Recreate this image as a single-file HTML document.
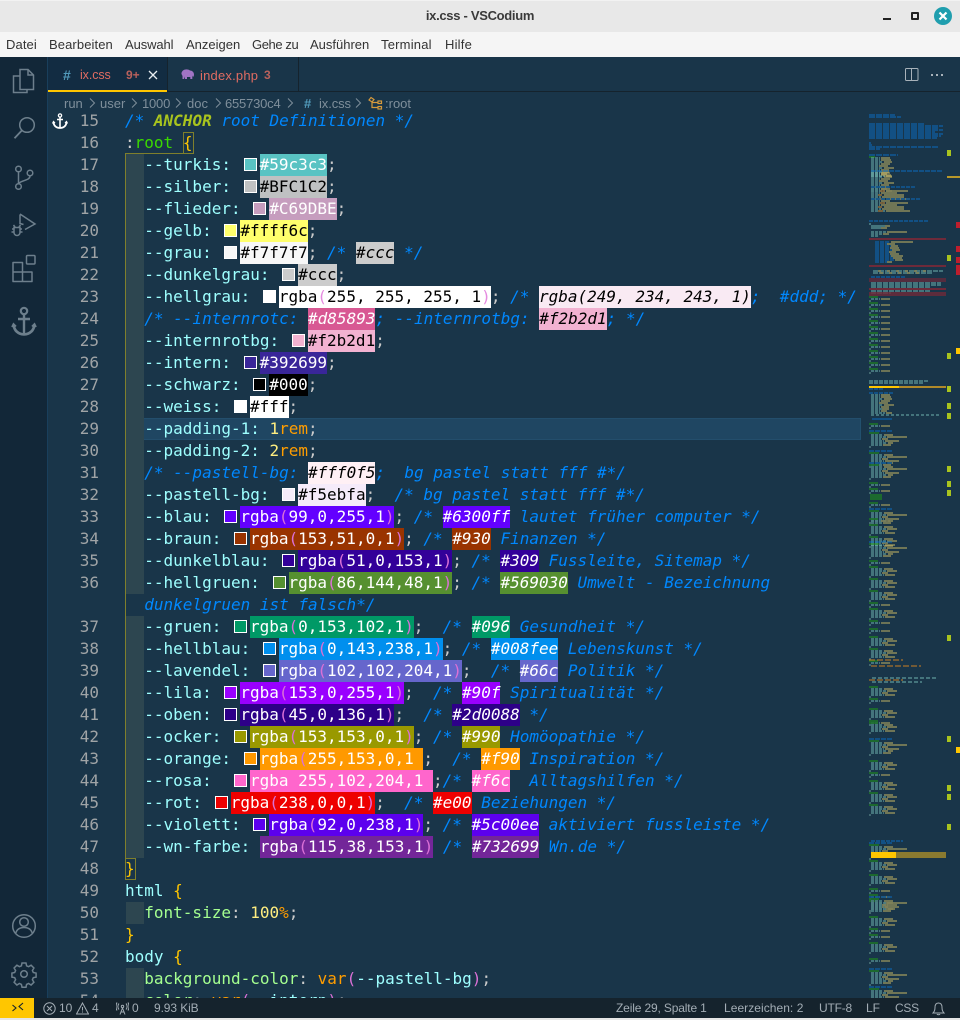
<!DOCTYPE html>
<html lang="de"><head><meta charset="utf-8"><title>ix.css - VSCodium</title>
<style>
*{box-sizing:border-box}
html,body{margin:0;padding:0;width:960px;height:1020px;overflow:hidden;background:#e8e8e8;font-family:"Liberation Sans",sans-serif}
.a{position:absolute;white-space:pre}
#code{position:absolute;left:125px;top:110px;width:736px;height:888px;overflow:hidden;font:16px/22px "DejaVu Sans Mono",monospace;color:#ccc}
.l{height:22px;line-height:22px;white-space:pre}
.p{color:#9effff}.g{color:#a5ff90}.c{color:#0088ff;font-style:italic}.y{color:#ffc600}
.n{color:#ffee80}.o{color:#ff9d00}.q{color:#da70d6}
.s{display:inline-block;width:13px;height:13px;border:1px solid #fff;margin:4px 3px 0;vertical-align:top}
.h{display:inline-block;height:22px;line-height:22px;vertical-align:top;color:#fff}
.k{color:#000}.it{font-style:italic}
#nums{position:absolute;left:60px;top:110px;width:39px;height:888px;overflow:hidden;text-align:right;font:16px/22px "DejaVu Sans Mono",monospace;color:#a0a4a6;white-space:pre}
.m{font-size:13px;color:#333;top:36px;line-height:17px}
.st{font-size:12px;color:#a3adb5;top:1000px;line-height:17px}
.bc{font-size:13px;color:#7f8f9b;top:95px;line-height:17px}
.tb{font-size:13px;top:67px;line-height:17px}
</style></head><body>

<div class="a" style="left:0;top:0;width:960px;height:32px;background:#e8e8e8;border-top:1px solid #f2f2f2"></div>
<div class="a" style="left:0;top:7px;width:960px;text-align:center;font-size:13px;font-weight:bold;letter-spacing:-.3px;color:#3a3a3a;line-height:18px">ix.css - VSCodium</div>
<div class="a" style="left:883px;top:18px;width:8px;height:2px;background:#222"></div>
<div class="a" style="left:911px;top:12px;width:8px;height:8px;border:2px solid #222;border-radius:1px"></div>
<svg class="a" style="left:934px;top:7px" width="18" height="18" viewBox="0 0 18 18"><circle cx="9" cy="9" r="9" fill="#1f9eae"/><path d="M5.5 5.5l7 7M12.5 5.5l-7 7" stroke="#fff" stroke-width="2.2"/></svg>

<div class="a" style="left:0;top:32px;width:960px;height:25px;background:#f5f5f5"></div>
<div class="a m" style="left:6px;letter-spacing:.1px">Datei</div>
<div class="a m" style="left:49px;letter-spacing:.1px">Bearbeiten</div>
<div class="a m" style="left:125px;letter-spacing:-.1px">Auswahl</div>
<div class="a m" style="left:186px">Anzeigen</div>
<div class="a m" style="left:252px;letter-spacing:-.4px">Gehe zu</div>
<div class="a m" style="left:310px">Ausführen</div>
<div class="a m" style="left:381px;letter-spacing:.2px">Terminal</div>
<div class="a m" style="left:445px;letter-spacing:.2px">Hilfe</div>

<div class="a" style="left:0;top:57px;width:960px;height:941px;background:#193549"></div>
<div class="a" style="left:0;top:998px;width:960px;height:20px;background:#15232d"></div>
<div class="a" style="left:0;top:1018px;width:960px;height:2px;background:#e6e6e6"></div>

<div class="a" style="left:0;top:57px;width:48px;height:941px;background:#122738;border-right:1px solid #193f5c"></div>
<svg class="a" style="left:0;top:57px" width="48" height="941" viewBox="0 0 48 941" fill="none" stroke="#6d7f8c" stroke-width="1.5">
<path d="M20 12.5h8l5.5 5.5v14.500h-13.500zM28 12.500v5.500h5.500"/><path d="M20 19h-6.500v16.500h13.500v-3"/>
<circle cx="27" cy="68" r="7.300"/><path d="M21.800 73.500l-7.300 7.800" stroke-width="1.800"/>
<circle cx="18.500" cy="112" r="2.800"/><circle cx="18.500" cy="129.500" r="2.800"/><circle cx="30" cy="116" r="2.800"/><path d="M18.500 115v11.500M30 119c0 4.500-8 4-11.500 7.500"/>
<path d="M20 157.500v9l3.500 1M20 157l15 10-10 5.500"/><path d="M14 170.500h6v5a3 3 0 0 1-6 0zM14 172h-2M20 172h2M14 175h-2.500M20 175h2.500M15 170l-1.500-2M19 170l1.500-2" />
<path d="M13 205.500h9.500v9.500h-9.500zM13 215h9.500v9.500h-9.500zM22.500 215h9.500v9.500h-9.500z" stroke-linejoin="round"/><rect x="26.500" y="198.500" width="8.500" height="8.500" rx="1"/>
<circle cx="24" cy="254" r="3.200" stroke-width="2.200"/><path d="M24 257v20M18 262h12" stroke-width="2.400"/><path d="M13.500 268c1 6 5 9 10.500 9.500 5.500-.5 9.500-3.500 10.500-9.500" stroke-width="2.600"/><path d="M12 270l1.500-3 2.500 2.500M36 270l-1.500-3-2.500 2.500" stroke-width="1.800"/>
<circle cx="24" cy="869" r="11.300"/><circle cx="24" cy="865" r="4.300"/><path d="M15.500 877c1-4.500 4-6.500 8.500-6.500s7.500 2 8.500 6.500"/>
<path d="M22 906h4l.6 2.800 2 .9 2.500-1.500 2.800 2.800-1.500 2.500.9 2 2.800.6v4l-2.800.6-.9 2 1.500 2.500-2.800 2.800-2.500-1.500-2 .9-.6 2.800h-4l-.6-2.800-2-.9-2.500 1.500-2.800-2.800 1.500-2.500-.9-2-2.800-.6v-4l2.800-.6.9-2-1.500-2.500 2.800-2.800 2.500 1.500 2-.9z"/><circle cx="24" cy="917" r="3.300"/>
</svg>

<div class="a" style="left:48px;top:91px;width:912px;height:1px;background:#15232d"></div>
<div class="a" style="left:48px;top:57px;width:119px;height:34px;background:#122c42"></div>
<div class="a" style="left:48px;top:90px;width:119px;height:2px;background:#ffc600"></div>
<div class="a" style="left:167px;top:57px;width:1px;height:34px;background:#15232d"></div>
<div class="a" style="left:298px;top:57px;width:1px;height:34px;background:#15232d"></div>
<div class="a tb" style="left:63px;color:#519aba;font-weight:bold;font-size:14px">#</div>
<div class="a tb" style="left:80px;color:#e06c62;font-size:12.5px;letter-spacing:-.1px">ix.css</div>
<div class="a tb" style="left:126px;color:#b9615c;font-size:12px;font-weight:bold">9+</div>
<svg class="a" style="left:148px;top:70px" width="10" height="10" viewBox="0 0 10 10"><path d="M1 1l8 8M9 1l-8 8" stroke="#e8eef2" stroke-width="1.300"/></svg>
<svg class="a" style="left:181px;top:69px" width="14" height="11" viewBox="0 0 14 11" fill="#a074c4"><path d="M2 1.500c2-1.500 5-1.500 7 0 2 0 4 1.500 4 4 0 1-.3 2-1 2.500l-.7-1.500V10h-2V8H6v2H4V7.500L3 10H1.500V7L.5 5C.3 3.500 1 2.500 2 1.500z"/></svg>
<div class="a tb" style="left:200px;color:#e06c62;letter-spacing:.2px">index.php</div>
<div class="a tb" style="left:264px;color:#b9615c;font-size:12px;font-weight:bold">3</div>
<svg class="a" style="left:905px;top:68px" width="14" height="13" viewBox="0 0 14 13" fill="none" stroke="#a8b2ba"><rect x=".5" y=".5" width="12.500" height="12" rx="1"/><path d="M6.500 .5v12"/></svg>
<div class="a" style="left:931px;top:74px;width:2px;height:2px;background:#a8b2ba;box-shadow:5px 0 #a8b2ba,10px 0 #a8b2ba"></div>

<div class="a bc" style="left:64px">run</div>
<div class="a bc" style="left:100px">user</div>
<div class="a bc" style="left:142px;letter-spacing:-.2px">1000</div>
<div class="a bc" style="left:187px">doc</div>
<div class="a bc" style="left:225px;letter-spacing:-.2px">655730c4</div>
<div class="a bc" style="left:304px;color:#519aba;font-weight:bold">#</div>
<div class="a bc" style="left:319px;letter-spacing:-.1px">ix.css</div>
<div class="a bc" style="left:385px">:root</div>
<svg class="a" style="left:85px;top:97px" width="290" height="13" viewBox="0 0 290 13" fill="none" stroke="#7f8f9b"><path d="M5 1.500l4.500 4.500-4.500 4.500M47 1.500l4.500 4.500-4.500 4.500M91 1.500l4.500 4.500-4.500 4.500M131 1.500l4.500 4.500-4.500 4.500M203 1.500l4.500 4.500-4.500 4.500M271 1.500l4.500 4.500-4.500 4.500"/></svg>
<svg class="a" style="left:367px;top:96px" width="16" height="15" viewBox="0 0 16 15" fill="none" stroke="#d69a3c" stroke-width="1.200"><path d="M4 1.500l3 2-2 2.500-3-2zM5 6v5.500h6M5 6.500h6"/><rect x="11" y="5" width="3.500" height="2.500"/><rect x="11" y="10.500" width="3.500" height="2.500"/></svg>

<div class="a" style="left:125px;top:418px;width:736px;height:22px;background:#1f4662;border:1px solid #234e6c"></div>
<div class="a" style="left:126px;top:154px;width:18px;height:440px;background:#2d4650"></div>
<div class="a" style="left:126px;top:616px;width:18px;height:242px;background:#2d4650"></div>
<div class="a" style="left:126px;top:902px;width:18px;height:22px;background:#2d4650"></div>
<div class="a" style="left:126px;top:968px;width:18px;height:30px;background:#2d4650"></div>
<div class="a" style="left:125px;top:154px;width:1px;height:704px;background:#7f7f2c"></div>
<div class="a" style="left:125px;top:153px;width:58px;height:1px;background:#7f7f2c"></div>
<div class="a" style="left:183px;top:132px;width:11px;height:22px;border:1px solid #7f7f2c"></div>
<div class="a" style="left:125px;top:858px;width:11px;height:22px;border:1px solid #7f7f2c"></div>

<svg class="a" style="left:52px;top:113px" width="16" height="16" viewBox="0 0 16 16" fill="none" stroke="#fff"><circle cx="8" cy="2.500" r="1.600" stroke-width="1.300"/><path d="M8 4v11M5 6.500h6" stroke-width="1.600"/><path d="M1.500 9.500c.5 3.500 3 5.300 6.500 5.500 3.500-.2 6-2 6.500-5.500" stroke-width="1.800"/><path d="M.5 10.500l1-2 1.500 1.500M15.500 10.500l-1-2-1.500 1.500" stroke-width="1.200"/></svg>

<div id="nums">15
16
17
18
19
20
21
22
23
24
25
26
27
28
29
30
31
32
33
34
35
36

37
38
39
40
41
42
43
44
45
46
47
48
49
50
51
52
53
54</div>

<div id="code"><div class="l"><span class="c">/* <b style="color:#a9c41e">ANCHOR</b> root Definitionen */</span></div>
<div class="l"><span>:</span><span style="color:#3ad900">root</span> <span class="y">{</span></div>
<div class="l">  <span class="p">--turkis:</span> <i class="s" style="background:#59c3c3"></i><span class="h" style="background:#59c3c3">#59c3c3</span>;</div>
<div class="l">  <span class="p">--silber:</span> <i class="s" style="background:#bfc1c2"></i><span class="h k" style="background:#bfc1c2">#BFC1C2</span>;</div>
<div class="l">  <span class="p">--flieder:</span> <i class="s" style="background:#c69dbe"></i><span class="h" style="background:#c69dbe">#C69DBE</span>;</div>
<div class="l">  <span class="p">--gelb:</span> <i class="s" style="background:#ffff6c"></i><span class="h k" style="background:#ffff6c">#ffff6c</span>;</div>
<div class="l">  <span class="p">--grau:</span> <i class="s" style="background:#f7f7f7"></i><span class="h k" style="background:#f7f7f7">#f7f7f7</span>; <span class="c">/* </span><span class="h k it" style="background:#ccc">#ccc</span><span class="c"> */</span></div>
<div class="l">  <span class="p">--dunkelgrau:</span> <i class="s" style="background:#ccc"></i><span class="h k" style="background:#ccc">#ccc</span>;</div>
<div class="l">  <span class="p">--hellgrau:</span> <i class="s" style="background:#fff"></i><span class="h k" style="background:#fff">rgba<span class="q" style="color:#e58be0">(</span>255, 255, 255, 1<span class="q" style="color:#e58be0">)</span></span>; <span class="c">/* </span><span class="h k it" style="background:#f9eaf3">rgba(249, 234, 243, 1)</span><span class="c">;  #ddd; */</span></div>
<div class="l">  <span class="c">/* --internrotc: </span><span class="h it" style="background:#d85893">#d85893</span><span class="c">; --internrotbg: </span><span class="h k it" style="background:#f2b2d1">#f2b2d1</span><span class="c">; */</span></div>
<div class="l">  <span class="p">--internrotbg:</span> <i class="s" style="background:#f2b2d1"></i><span class="h k" style="background:#f2b2d1">#f2b2d1</span>;</div>
<div class="l">  <span class="p">--intern:</span> <i class="s" style="background:#392699"></i><span class="h" style="background:#392699">#392699</span>;</div>
<div class="l">  <span class="p">--schwarz:</span> <i class="s" style="background:#000"></i><span class="h" style="background:#000">#000</span>;</div>
<div class="l">  <span class="p">--weiss:</span> <i class="s" style="background:#fff"></i><span class="h k" style="background:#fff">#fff</span>;</div>
<div class="l">  <span class="p">--padding-1:</span> <span class="n">1</span><span class="o">rem</span>;</div>
<div class="l">  <span class="p">--padding-2:</span> <span class="n">2</span><span class="o">rem</span>;</div>
<div class="l">  <span class="c">/* --pastell-bg: </span><span class="h k it" style="background:#fff0f5">#fff0f5</span><span class="c">;  bg pastel statt fff #*/</span></div>
<div class="l">  <span class="p">--pastell-bg:</span> <i class="s" style="background:#f5ebfa"></i><span class="h k" style="background:#f5ebfa">#f5ebfa</span>;  <span class="c">/* bg pastel statt fff #*/</span></div>
<div class="l">  <span class="p">--blau:</span> <i class="s" style="background:#6300ff"></i><span class="h" style="background:#6300ff">rgba<span class="q">(</span>99,0,255,1<span class="q">)</span></span>; <span class="c">/* </span><span class="h it" style="background:#6300ff">#6300ff</span><span class="c"> lautet früher computer */</span></div>
<div class="l">  <span class="p">--braun:</span> <i class="s" style="background:#993300"></i><span class="h" style="background:#993300">rgba<span class="q">(</span>153,51,0,1<span class="q">)</span></span>; <span class="c">/* </span><span class="h it" style="background:#993300">#930</span><span class="c"> Finanzen */</span></div>
<div class="l">  <span class="p">--dunkelblau:</span> <i class="s" style="background:#330099"></i><span class="h" style="background:#330099">rgba<span class="q">(</span>51,0,153,1<span class="q">)</span></span>; <span class="c">/* </span><span class="h it" style="background:#330099">#309</span><span class="c"> Fussleite, Sitemap */</span></div>
<div class="l">  <span class="p">--hellgruen:</span> <i class="s" style="background:#569030"></i><span class="h" style="background:#569030">rgba<span class="q">(</span>86,144,48,1<span class="q">)</span></span>; <span class="c">/* </span><span class="h it" style="background:#569030">#569030</span><span class="c"> Umwelt - Bezeichnung</span></div>
<div class="l">  <span class="c">dunkelgruen ist falsch*/</span></div>
<div class="l">  <span class="p">--gruen:</span> <i class="s" style="background:#009966"></i><span class="h" style="background:#009966">rgba<span class="q">(</span>0,153,102,1<span class="q">)</span></span>;  <span class="c">/* </span><span class="h it" style="background:#009966">#096</span><span class="c"> Gesundheit */</span></div>
<div class="l">  <span class="p">--hellblau:</span> <i class="s" style="background:#008fee"></i><span class="h" style="background:#008fee">rgba<span class="q">(</span>0,143,238,1<span class="q">)</span></span>; <span class="c">/* </span><span class="h it" style="background:#008fee">#008fee</span><span class="c"> Lebenskunst */</span></div>
<div class="l">  <span class="p">--lavendel:</span> <i class="s" style="background:#6666cc"></i><span class="h" style="background:#6666cc">rgba<span class="q">(</span>102,102,204,1<span class="q">)</span></span>;  <span class="c">/* </span><span class="h it" style="background:#6666cc">#66c</span><span class="c"> Politik */</span></div>
<div class="l">  <span class="p">--lila:</span> <i class="s" style="background:#9900ff"></i><span class="h" style="background:#9900ff">rgba<span class="q">(</span>153,0,255,1<span class="q">)</span></span>;  <span class="c">/* </span><span class="h it" style="background:#9900ff">#90f</span><span class="c"> Spiritualität */</span></div>
<div class="l">  <span class="p">--oben:</span> <i class="s" style="background:#2d0088"></i><span class="h" style="background:#2d0088">rgba<span class="q">(</span>45,0,136,1<span class="q">)</span></span>;  <span class="c">/* </span><span class="h it" style="background:#2d0088">#2d0088</span><span class="c"> */</span></div>
<div class="l">  <span class="p">--ocker:</span> <i class="s" style="background:#999900"></i><span class="h" style="background:#999900">rgba<span class="q">(</span>153,153,0,1<span class="q">)</span></span>; <span class="c">/* </span><span class="h it" style="background:#999900">#990</span><span class="c"> Homöopathie */</span></div>
<div class="l">  <span class="p">--orange:</span> <i class="s" style="background:#ff9900"></i><span class="h" style="background:#ff9900">rgba<span class="q">(</span>255,153,0,1<span style="color:#ff9900">)</span></span>;  <span class="c">/* </span><span class="h it" style="background:#ff9900">#f90</span><span class="c"> Inspiration */</span></div>
<div class="l">  <span class="p">--rosa:</span>  <i class="s" style="background:#ff66cc"></i><span class="h" style="background:#ff66cc">rgba<span style="color:#ff66cc">(</span>255,102,204,1<span style="color:#ff66cc">)</span></span>;<span class="c">/* </span><span class="h it" style="background:#ff66cc">#f6c</span><span class="c">  Alltagshilfen */</span></div>
<div class="l">  <span class="p">--rot:</span> <i class="s" style="background:#ee0000"></i><span class="h" style="background:#ee0000">rgba<span class="q">(</span>238,0,0,1<span class="q">)</span></span>;  <span class="c">/* </span><span class="h it" style="background:#ee0000">#e00</span><span class="c"> Beziehungen */</span></div>
<div class="l">  <span class="p">--violett:</span> <i class="s" style="background:#5c00ee"></i><span class="h" style="background:#5c00ee">rgba<span class="q">(</span>92,0,238,1<span class="q">)</span></span>; <span class="c">/* </span><span class="h it" style="background:#5c00ee">#5c00ee</span><span class="c"> aktiviert fussleiste */</span></div>
<div class="l">  <span class="p">--wn-farbe:</span> <span class="h" style="background:#732699">rgba<span class="q">(</span>115,38,153,1<span class="q">)</span></span> <span class="c">/* </span><span class="h it" style="background:#732699">#732699</span><span class="c"> Wn.de */</span></div>
<div class="l"><span class="y">}</span></div>
<div class="l"><span class="p">html</span> <span class="y">{</span></div>
<div class="l">  <span class="g">font-size</span>: <span class="n">100</span><span class="o">%</span>;</div>
<div class="l"><span class="y">}</span></div>
<div class="l"><span class="p">body</span> <span class="y">{</span></div>
<div class="l">  <span class="g">background-color</span>: <span class="o">var</span><span class="q">(</span><span class="p">--pastell-bg</span><span class="q">)</span>;</div>
<div class="l">  <span class="g">color</span>: <span class="o">var</span><span class="q">(</span><span class="p">--intern</span><span class="q">)</span>;</div></div>

<svg class="a" style="left:860px;top:100px" width="100" height="898" viewBox="860 100 100 898" fill="none" stroke-width="1.200">
<defs>
<g id="b1"><path d="M869 1h9" stroke="#1e8a1e"/><path d="M871 3h9" stroke="#5f9a9a" stroke-dasharray="3 1"/><path d="M881 3h9" stroke="#a59d5f"/><path d="M869 5h2" stroke="#5f8a8a"/></g>
<g id="b2"><path d="M869 1h9" stroke="#1e8a1e"/><path d="M871 3h12M871 5h15M871 7h10M871 9h13" stroke="#5f9a9a" stroke-dasharray="3 1"/><path d="M884 3h9M887 5h10M882 7h6M885 9h10" stroke="#a59d5f"/><path d="M869 11h2" stroke="#5f8a8a"/></g>
<g id="b3"><path d="M869 1h24" stroke="#0f62a8" stroke-dasharray="5 1"/><path d="M869 3h10" stroke="#1e8a1e"/><path d="M871 5h12M871 7h15M871 9h10M871 11h13M871 13h16M871 15h11" stroke="#5f9a9a" stroke-dasharray="3 1"/><path d="M884 5h9M887 7h20M882 9h6M885 11h14M888 13h5M883 15h8" stroke="#a59d5f"/><path d="M869 17h2" stroke="#5f8a8a"/></g>
<g id="b4"><path d="M871 1h9M871 3h9M871 5h12M871 7h9M871 9h7M871 11h12M871 13h9M871 15h11M871 17h9M871 19h14" stroke="#5f9a9a" stroke-dasharray="3 1"/><path d="M881 1h9M881 3h10M884 5h8M881 7h9M879 9h9M884 11h10M881 13h8M882 15h7M881 17h6M886 19h6" stroke="#a59d5f"/></g>
<g id="b5"><path d="M871 1h9M871 3h14M871 5h9M871 7h12M871 9h10M871 11h14" stroke="#5f9a9a" stroke-dasharray="3 1"/><path d="M881 1h9M886 3h22M881 5h16M884 7h20M882 9h22M886 11h24" stroke="#a59d5f"/><path d="M880 3h5M878 7h4M878 11h5" stroke="#a8702c"/></g>
</defs>
<path d="M869 115h26M869 117h32M869 124h55M869 126h74M869 128h70M869 130h74M869 132h66M869 134h74M869 136h72M869 138h68M869 143h2M869 145h3M869 147h70M869 149h11M869 155h29" stroke="#0f62a8" stroke-dasharray="6 1"/>
<path d="M869 157h6" stroke="#1e8a1e"/>
<use href="#b4" y="157"/><path d="M871 171h72" stroke="#0f62a8" stroke-dasharray="5 1"/><use href="#b4" y="172"/><path d="M871 187h44" stroke="#0f62a8" stroke-dasharray="4 1"/><use href="#b5" y="188"/><path d="M871 199h50" stroke="#0f62a8" stroke-dasharray="4 1"/><use href="#b5" y="200"/>
<path d="M869 221h60" stroke="#0f62a8" stroke-dasharray="4 1"/>
<path d="M869 224h2M871 226h14M871 228h10" stroke="#5f9a9a"/><path d="M885 226h5M881 228h6" stroke="#a59d5f"/>
<path d="M871 232h16M871 234h12M871 236h8" stroke="#5f9a9a" stroke-dasharray="3 1"/><path d="M887 232h20M883 234h6" stroke="#a59d5f"/>
<path d="M875 242h14M875 244h12M875 246h16M875 248h15M875 250h17M875 252h14M875 254h15M875 256h16M875 258h18M875 260h20M875 262h12" stroke="#0f62a8" stroke-dasharray="4 1"/>
<path d="M891 242h22M887 244h8M891 246h7M890 248h9M892 250h8M889 252h7M890 254h9M891 256h12M893 258h9M895 260h8M887 262h5" stroke="#a59d5f"/>
<path d="M873 271h70M873 273h60" stroke="#5f9a9a" stroke-dasharray="5 1"/><path d="M878 271h50M880 273h40" stroke="#a59d5f" stroke-dasharray="3 6"/>
<path d="M871 277h34" stroke="#0f62a8" stroke-dasharray="4 1"/>
<path d="M871 283h70M871 285h70M871 287h60M871 291h60M871 293h20" stroke="#5f9a9a" stroke-dasharray="5 1"/>
<use href="#b1" y="296"/><use href="#b1" y="302"/><use href="#b1" y="308"/><use href="#b1" y="314"/><use href="#b1" y="320"/><use href="#b1" y="326"/><use href="#b1" y="332"/><use href="#b1" y="338"/><use href="#b1" y="344"/><use href="#b1" y="350"/><use href="#b1" y="356"/><use href="#b1" y="362"/><use href="#b1" y="368"/>
<path d="M869 381h60M869 383h55" stroke="#5f9a9a" stroke-dasharray="4 1"/>
<path d="M869 389h15M869 393h24" stroke="#0f62a8" stroke-dasharray="4 1"/><use href="#b4" y="394"/>
<path d="M871 415h68" stroke="#5f9a9a" stroke-dasharray="3 2"/><path d="M872 419h20" stroke="#0f62a8"/>
<use href="#b1" y="423"/><use href="#b3" y="430"/><use href="#b3" y="450"/><use href="#b3" y="462"/>
<use href="#b1" y="482"/><use href="#b1" y="488"/><path d="M870 495h12M870 497h12M870 499h12" stroke="#1e8a1e"/>
<use href="#b1" y="502"/><use href="#b3" y="508"/><use href="#b1" y="518"/><use href="#b2" y="524"/><use href="#b2" y="536"/><use href="#b3" y="541"/><use href="#b1" y="560"/><use href="#b2" y="566"/><use href="#b2" y="578"/><use href="#b2" y="590"/><use href="#b1" y="602"/><use href="#b2" y="608"/><use href="#b1" y="620"/><use href="#b1" y="628"/><use href="#b2" y="636"/><use href="#b2" y="648"/><use href="#b1" y="660"/>
<path d="M869 660h34M871 666h50M869 680h34" stroke="#a8702c" stroke-dasharray="6 2"/>
<path d="M872 678h66M872 682h50" stroke="#5f9a9a" stroke-dasharray="4 2"/>
<use href="#b2" y="686"/><use href="#b1" y="698"/><use href="#b2" y="708"/><use href="#b1" y="720"/><use href="#b2" y="722"/><use href="#b3" y="738"/><use href="#b2" y="760"/><use href="#b1" y="772"/><use href="#b2" y="780"/><use href="#b2" y="792"/><use href="#b2" y="804"/>
<path d="M871 841h32" stroke="#0f62a8" stroke-dasharray="4 1"/><use href="#b3" y="842"/>
<use href="#b2" y="860"/><use href="#b2" y="874"/><use href="#b1" y="888"/><use href="#b1" y="894"/><use href="#b2" y="900"/><use href="#b3" y="896"/><use href="#b2" y="916"/><use href="#b1" y="928"/><use href="#b1" y="934"/><use href="#b2" y="942"/><use href="#b1" y="958"/><use href="#b3" y="968"/><use href="#b3" y="986"/>
<g stroke="none">
<rect x="869" y="238" width="77" height="2" fill="#6e2a3a"/><rect x="869" y="265" width="77" height="2" fill="#6e2a3a"/><rect x="869" y="278" width="77" height="4" fill="#6e2a3a" opacity=".7"/><rect x="869" y="288" width="77" height="2" fill="#6e2a3a"/><rect x="869" y="292" width="77" height="4" fill="#6e2a3a" opacity=".8"/>
<rect x="869" y="386" width="30" height="2" fill="#ffc600"/><rect x="899" y="386" width="47" height="2" fill="#b08a2a"/>
<rect x="871" y="852" width="25" height="6" fill="#ffc600"/><rect x="896" y="852" width="50" height="6" fill="#8a7a30"/>
<g fill="#a9c41e"><rect x="947" y="150" width="4" height="6"/><rect x="947" y="255" width="4" height="6"/><rect x="947" y="353" width="4" height="6"/><rect x="947" y="386" width="4" height="6"/><rect x="947" y="403" width="4" height="6"/><rect x="947" y="413" width="4" height="6"/><rect x="947" y="466" width="4" height="6"/><rect x="947" y="481" width="4" height="6"/><rect x="947" y="490" width="4" height="6"/><rect x="947" y="635" width="4" height="6"/><rect x="947" y="736" width="4" height="6"/><rect x="947" y="785" width="4" height="6"/><rect x="947" y="794" width="4" height="6"/><rect x="947" y="824" width="4" height="6"/></g>
<rect x="947" y="176" width="13" height="2" fill="#b8982a"/>
<g fill="#be1e2d"><rect x="956" y="222" width="4" height="6"/><rect x="956" y="246" width="4" height="6"/><rect x="956" y="257" width="4" height="6"/><rect x="956" y="265" width="4" height="10"/></g>
<rect x="956" y="348" width="4" height="6" fill="#ffc600"/><rect x="956" y="747" width="4" height="6" fill="#ffc600"/>
<rect x="860" y="418" width="1" height="22" fill="#22506e"/>
</g>
</svg>

<div class="a" style="left:0;top:998px;width:34px;height:20px;background:#ffc600"></div>
<svg class="a" style="left:11px;top:1002px" width="13" height="12" viewBox="0 0 13 12" fill="none" stroke="#15232d" stroke-width="1.100"><path d="M1.500 9l3.500-3-3.500-3M12 1L8 4.500 12 8"/></svg>
<svg class="a" style="left:43px;top:1002px" width="13" height="13" viewBox="0 0 13 13" fill="none" stroke="#a3adb5"><circle cx="6.500" cy="6.500" r="5.700"/><path d="M4 4l5 5M9 4l-5 5"/></svg>
<div class="a st" style="left:59px">10</div>
<svg class="a" style="left:76px;top:1002px" width="13" height="13" viewBox="0 0 13 13" fill="none" stroke="#a3adb5"><path d="M6.500 1L12.500 12H.5zM6.500 5v3.500M6.500 9.500v1"/></svg>
<div class="a st" style="left:92px">4</div>
<svg class="a" style="left:116px;top:1002px" width="13" height="13" viewBox="0 0 13 13" fill="none" stroke="#a3adb5"><circle cx="6.500" cy="4.500" r="1.200"/><path d="M6.500 6L4 12.500M6.500 6L9 12.500M4.800 10h3.400M3 1.500c-1.500 1.700-1.500 4.300 0 6M10 1.500c1.500 1.700 1.500 4.300 0 6M1 .5c-1.300 2.500-1.300 5.500 0 8M12 .5c1.300 2.500 1.300 5.500 0 8"/></svg>
<div class="a st" style="left:132px">0</div>
<div class="a st" style="left:154px;letter-spacing:-.1px">9.93 KiB</div>
<div class="a st" style="left:616px;letter-spacing:-.15px">Zeile 29, Spalte 1</div>
<div class="a st" style="left:724px;letter-spacing:.05px">Leerzeichen: 2</div>
<div class="a st" style="left:819px;letter-spacing:-.2px">UTF-8</div>
<div class="a st" style="left:866px">LF</div>
<div class="a st" style="left:895px;letter-spacing:-.3px">CSS</div>
<svg class="a" style="left:932px;top:1002px" width="13" height="14" viewBox="0 0 13 14" fill="none" stroke="#a3adb5"><path d="M6.500 1C4 1 3 3 3 5.500c0 2.500-.5 4-2 5.500h11c-1.500-1.500-2-3-2-5.500C10 3 9 1 6.500 1zM5 12c.3 1 2.700 1 3 0"/></svg>
</body></html>
